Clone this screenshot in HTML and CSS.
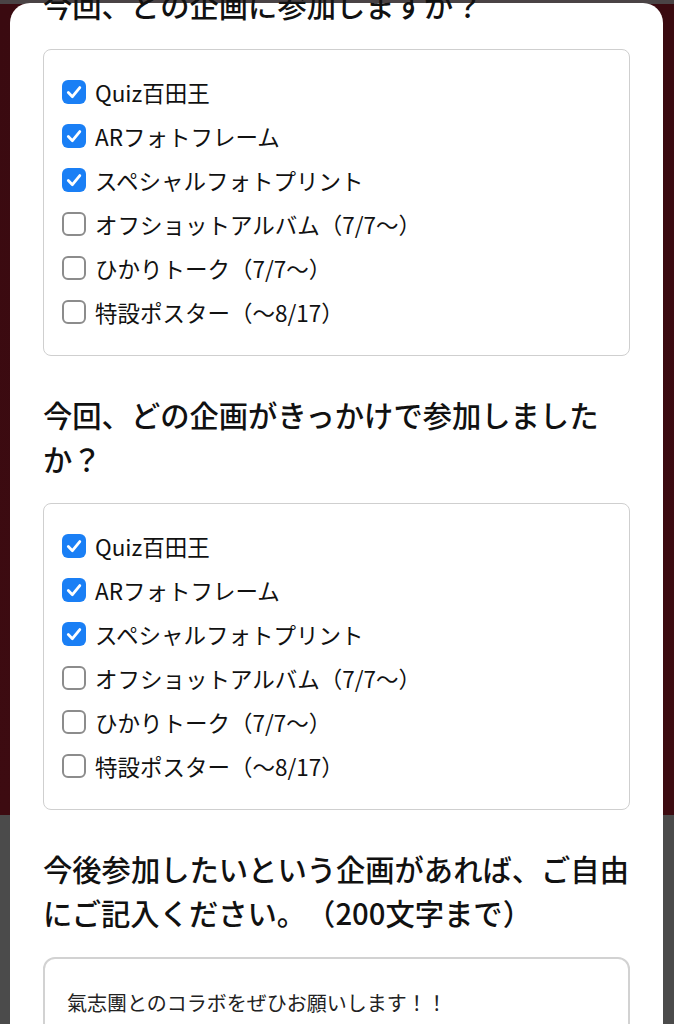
FILE: index.html
```html
<!DOCTYPE html>
<html lang="ja">
<head>
<meta charset="utf-8">
<title>アンケート</title>
<link rel="stylesheet" href="styles.css">
</head>
<body>
<main class="card">
  <section class="question">
    <h2 class="q-title q-first">今回、どの企画に参加しますか？</h2>
    <div class="options">
      <label class="opt"><span class="box on"><svg viewBox="0 0 24 24"><path d="M6.3 12.6 L10.4 16.7 L17.8 7.6"/></svg></span><span class="txt">Quiz百田王</span></label>
      <label class="opt"><span class="box on"><svg viewBox="0 0 24 24"><path d="M6.3 12.6 L10.4 16.7 L17.8 7.6"/></svg></span><span class="txt">ARフォトフレーム</span></label>
      <label class="opt"><span class="box on"><svg viewBox="0 0 24 24"><path d="M6.3 12.6 L10.4 16.7 L17.8 7.6"/></svg></span><span class="txt">スペシャルフォトプリント</span></label>
      <label class="opt"><span class="box"></span><span class="txt">オフショットアルバム（7/7〜）</span></label>
      <label class="opt"><span class="box"></span><span class="txt">ひかりトーク（7/7〜）</span></label>
      <label class="opt"><span class="box"></span><span class="txt">特設ポスター（〜8/17）</span></label>
    </div>
  </section>

  <section class="question">
    <h2 class="q-title">今回、どの企画がきっかけで参加しましたか？</h2>
    <div class="options">
      <label class="opt"><span class="box on"><svg viewBox="0 0 24 24"><path d="M6.3 12.6 L10.4 16.7 L17.8 7.6"/></svg></span><span class="txt">Quiz百田王</span></label>
      <label class="opt"><span class="box on"><svg viewBox="0 0 24 24"><path d="M6.3 12.6 L10.4 16.7 L17.8 7.6"/></svg></span><span class="txt">ARフォトフレーム</span></label>
      <label class="opt"><span class="box on"><svg viewBox="0 0 24 24"><path d="M6.3 12.6 L10.4 16.7 L17.8 7.6"/></svg></span><span class="txt">スペシャルフォトプリント</span></label>
      <label class="opt"><span class="box"></span><span class="txt">オフショットアルバム（7/7〜）</span></label>
      <label class="opt"><span class="box"></span><span class="txt">ひかりトーク（7/7〜）</span></label>
      <label class="opt"><span class="box"></span><span class="txt">特設ポスター（〜8/17）</span></label>
    </div>
  </section>

  <section class="question">
    <h2 class="q-title">今後参加したいという企画があれば、ご自由にご記入ください。（200文字まで）</h2>
    <div class="textbox">氣志團とのコラボをぜひお願いします！！</div>
  </section>
</main>
</body>
</html>
```

FILE: styles.css
```css
html, body {
  margin: 0;
  padding: 0;
}
body {
  width: 674px;
  height: 1024px;
  overflow: hidden;
  background: linear-gradient(to bottom, #4a4345 0, #4a4345 4px, #3a0a10 4px, #3d0b11 815px, #4b4b4b 815px, #4b4b4b 100%);
  font-family: "Noto Sans CJK JP", "Noto Sans", sans-serif;
  color: #111;
  text-spacing-trim: space-all;
}
.card {
  margin: 3px 0 0 10px;
  width: 587px;
  height: 1100px;
  padding: 0 33px;
  background: #fff;
  border-radius: 20px 20px 0 0;
}
.question {
  display: flex;
  flex-direction: column;
}
.q-title {
  margin: 0 0 23px 0;
  font-size: 29.3px;
  line-height: 44px;
  font-weight: 500;
  color: #111;
}
.q-first {
  margin-top: -21px;
}
.options {
  border: 1px solid #cfcfcf;
  border-radius: 8px;
  padding: 20px 18px 21px 18px;
  margin-bottom: 36px;
  display: flex;
  flex-direction: column;
}
.opt {
  height: 44px;
  display: flex;
  align-items: center;
  gap: 9px;
}
.box {
  width: 24px;
  height: 24px;
  box-sizing: border-box;
  border: 2px solid #8c8c8c;
  border-radius: 6px;
  flex: none;
  display: flex;
  align-items: center;
  justify-content: center;
}
.box.on {
  border: none;
  background: #1a7ff5;
}
.box svg {
  width: 24px;
  height: 24px;
  fill: none;
  stroke: #fff;
  stroke-width: 2.8;
  stroke-linecap: round;
  stroke-linejoin: round;
}
.txt {
  font-size: 22.5px;
  line-height: 30px;
  color: #111;
}
.textbox {
  border: 2px solid #d2d2d2;
  border-radius: 12px;
  padding: 29px 22px;
  font-size: 20px;
  line-height: 30px;
  color: #222;
  height: 120px;
}
```
